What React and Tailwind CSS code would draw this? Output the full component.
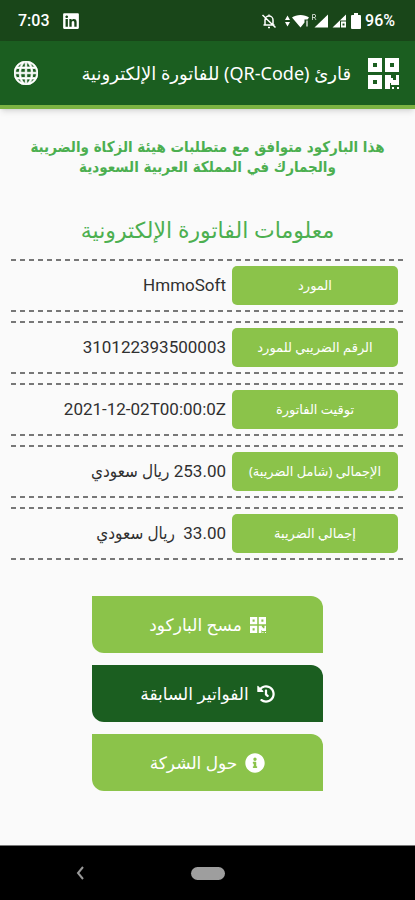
import React from 'react';
import { FaHistory, FaInfoCircle, FaLinkedin } from 'react-icons/fa';
import { BsGlobe } from 'react-icons/bs';

const QrIcon = ({ className }) => (
    <svg viewBox="0 0 31 31" className={className} fill="currentColor" fillRule="evenodd">
        <path d="M0 0h14v14H0zM5 5v4h4V5z" />
        <path d="M17 0h14v14H17zM22 5v4h4V5z" />
        <path d="M0 17h14v14H0zM5 22v4h4v-4z" />
        <path d="M17 17h6v3h2v2h3v-5h3v10h-8v-2h-1v6h-5z" />
        <path d="M24 29h2v2h-2zM29 29h2v2h-2z" />
    </svg>
);

const rows = [
    { label: 'المورد', value: 'HmmoSoft' },
    { label: 'الرقم الضريبي للمورد', value: '310122393500003' },
    { label: 'توقيت الفاتورة', value: '2021-12-02T00:00:0Z', ltr: true },
    { label: 'الإجمالي (شامل الضريبة)', value: '253.00 ريال سعودي' },
    { label: 'إجمالي الضريبة', value: '33.00  ريال سعودي' },
];

const actions = [
    { label: 'مسح الباركود', icon: QrIcon, color: 'bg-[#8bc34a]', size: 'size-4' },
    { label: 'الفواتير السابقة', icon: FaHistory, color: 'bg-[#1b5e20]', size: 'size-[18px]' },
    { label: 'حول الشركة', icon: FaInfoCircle, color: 'bg-[#8bc34a]', size: 'size-5' },
];

const StatusBar = () => (
    <div dir="ltr" className="flex h-[41px] items-center justify-between bg-[#194619] pl-[18px] pr-5 text-white font-['Roboto',sans-serif]">
        <div className="flex items-center gap-3">
            <span className="text-base font-medium">7:03</span>
            <FaLinkedin className="size-[18px]" />
        </div>
        <div className="flex items-center">
            {/* muted bell */}
            <svg viewBox="0 0 16 16" className="mr-2 size-4" fill="none" stroke="currentColor" strokeWidth="1.5">
                <path d="M4 12V7a4 4 0 0 1 8 0v5M2.500 12h11M8 1.500V3M7 14.500h2M1.500 2l13 12.500" />
            </svg>
            {/* data arrows and wifi */}
            <svg viewBox="0 0 26 16" className="h-4 w-[26px]" fill="currentColor">
                <path d="M2.500 2.500 5 7H0zM2.500 13.500 0 9h5z" />
                <path d="M7 4.500C11 1 20 1 24 4.500L22.500 6.500h-3v3L15.500 14.500z" />
                <path d="M21 7.500h2v6h-2z" opacity=".6" />
            </svg>
            {/* roaming signal */}
            <svg viewBox="0 0 18 16" className="h-4 w-[18px]" fill="currentColor">
                <path d="M17 1.500v13H3.500z" />
                <path d="M1.500 7V1.500H4q1.500 1.500 0 3H1.500M3.500 4.500 5 7" fill="none" stroke="currentColor" opacity=".7" />
            </svg>
            {/* second sim */}
            <svg viewBox="0 0 16 16" className="ml-[2px] size-4" fill="currentColor">
                <path d="M15 1.500v6H9v7H1.500z" />
                <path d="M10 8.500h5v6h-5zM11.500 10.500h2v2h-2z" fillRule="evenodd" />
            </svg>
            <svg viewBox="0 0 10 16" className="ml-1 mr-1 h-4 w-[10px]" fill="currentColor">
                <path d="M3 0h4v2h2q1 0 1 1v12q0 1-1 1H1q-1 0-1-1V3q0-1 1-1h2z" />
            </svg>
            <span className="text-base font-medium">96%</span>
        </div>
    </div>
);

const DashedLine = () => (
    <div aria-hidden="true" className="h-[2px] bg-[repeating-linear-gradient(90deg,#777_0_5px,transparent_5px_9px)]" />
);

const InfoRow = ({ label, value, ltr }) => (
    <div>
        <DashedLine />
        <div className="flex items-center gap-[6px] px-[6px] py-[5px]">
            <dt className="flex h-[39px] w-[166px] shrink-0 items-center justify-center rounded-[5px] bg-[#8bc34a] text-[13px] whitespace-nowrap text-white">
                {label}
            </dt>
            <dd className="text-[17px] whitespace-pre text-[#303030] font-['Roboto','DejaVu_Sans_Condensed','DejaVu_Sans',sans-serif]">
                <bdi dir={ltr ? 'ltr' : 'rtl'}>{value}</bdi>
            </dd>
        </div>
        <DashedLine />
    </div>
);

const NavBar = () => (
    <div dir="ltr" className="grid h-[55px] grid-cols-[1fr_34px_1fr] items-center border-t border-[#777] bg-black">
        <button type="button" aria-label="رجوع" className="ml-[76px] w-2 text-[#999]">
            <svg viewBox="0 0 8 14" className="h-[14px] w-2" fill="none" stroke="currentColor" strokeWidth="2">
                <path d="M7 1 2 7l5 6" />
            </svg>
        </button>
        <button type="button" aria-label="الرئيسية" className="h-[13px] rounded-full bg-[#9e9e9e]" />
    </div>
);

const App = () => {
    return (
        <div dir="rtl" lang="ar" className="flex min-h-screen flex-col bg-[#fafafa] font-['Noto_Sans','DejaVu_Sans',sans-serif]">
            <StatusBar />
            <header className="flex h-[68px] items-center border-b-4 border-[#7cb342] bg-[#1b5e20] pr-4 pl-[14px] text-white shadow-md">
                <QrIcon className="size-[31px] shrink-0" />
                <h1 className="mr-[17px] text-[18px] whitespace-nowrap">قارئ (QR-Code) للفاتورة الإلكترونية</h1>
                <button type="button" aria-label="اللغة" className="mr-auto">
                    <BsGlobe className="size-6" stroke="currentColor" strokeWidth="0.5" />
                </button>
            </header>

            <main className="flex-1 pb-[53px]">
                <p className="mx-auto max-w-[360px] pt-7 text-center text-[15px] leading-5 font-bold text-[#4caf50] font-['DejaVu_Sans_Condensed','DejaVu_Sans',sans-serif]">
                    هذا الباركود متوافق مع متطلبات هيئة الزكاة والضريبة والجمارك في المملكة العربية السعودية
                </p>
                <h2 className="mt-9 text-center text-[22px] leading-8 text-[#4caf50]">معلومات الفاتورة الإلكترونية</h2>

                <dl className="mx-[11px] mt-[14px] flex flex-col gap-[9px]">
                    {rows.map((r) => (
                        <InfoRow key={r.label} {...r} />
                    ))}
                </dl>

                <div className="mx-[92px] mt-9 flex flex-col gap-3">
                    {actions.map(({ label, icon: Icon, color, size }) => (
                        <button key={label} type="button" className={`flex h-[57px] items-center justify-center gap-2 rounded-tr-xl rounded-bl-xl text-[17px] text-white ${color}`}>
                            <Icon className={size} />
                            {label}
                        </button>
                    ))}
                </div>
            </main>

            <NavBar />
        </div>
    );
};

export default App;
